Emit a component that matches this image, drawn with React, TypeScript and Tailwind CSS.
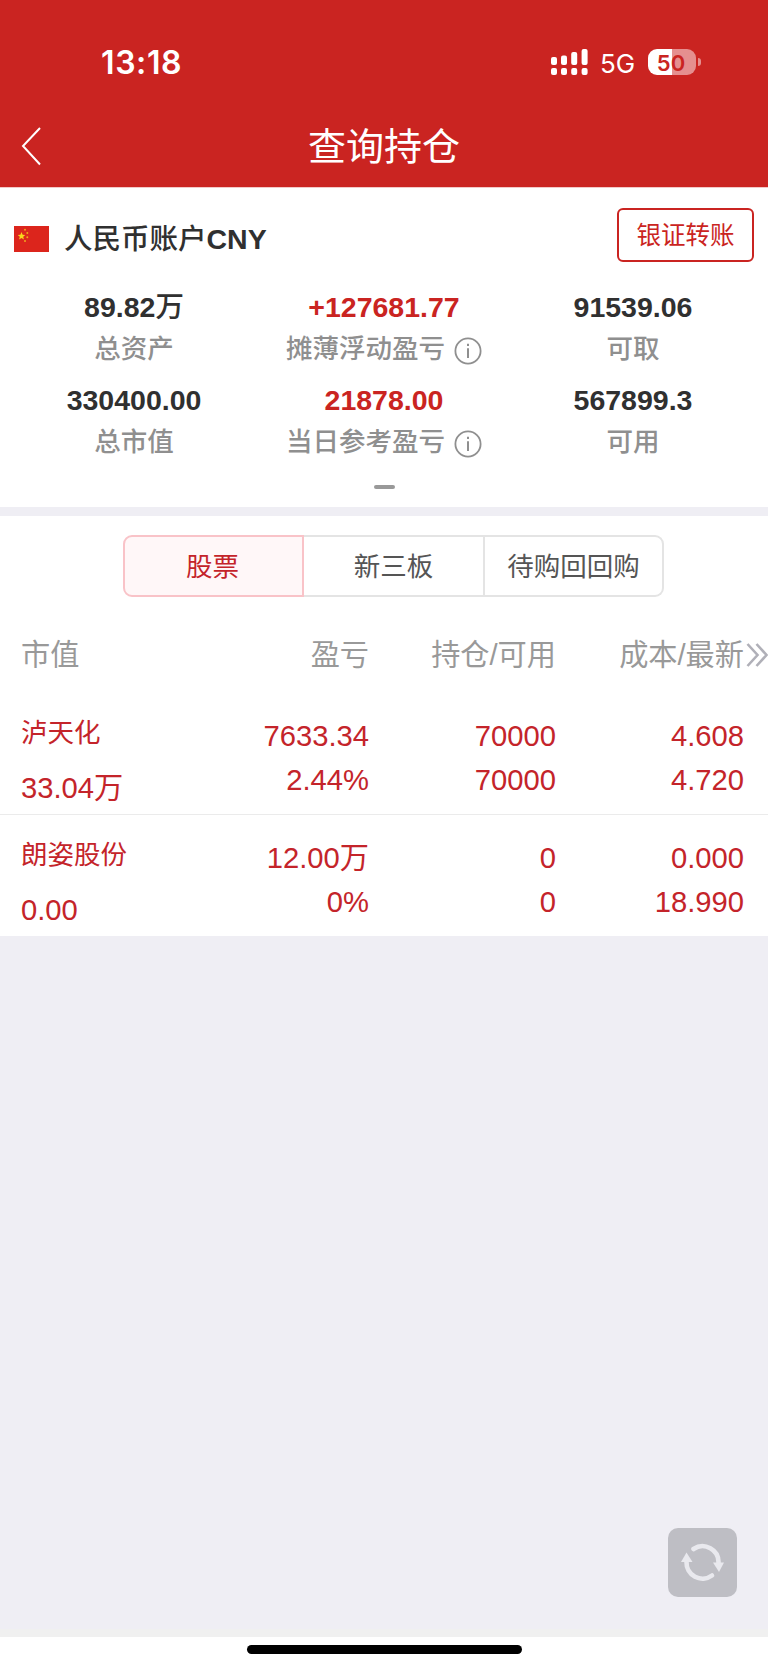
import React from 'react';

interface Stat {
  value: string;
  unit?: string;
  label: string;
  highlight?: boolean;
  info?: boolean;
}

interface Holding {
  name: string;
  marketValue: string;
  profit: string;
  profitRate: string;
  position: string;
  available: string;
  cost: string;
  latest: string;
}

const stats: Stat[] = [
  { value: '89.82', unit: '万', label: '总资产' },
  { value: '+127681.77', label: '摊薄浮动盈亏', highlight: true, info: true },
  { value: '91539.06', label: '可取' },
  { value: '330400.00', label: '总市值' },
  { value: '21878.00', label: '当日参考盈亏', highlight: true, info: true },
  { value: '567899.3', label: '可用' },
];

const holdings: Holding[] = [
  {
    name: '泸天化',
    marketValue: '33.04万',
    profit: '7633.34',
    profitRate: '2.44%',
    position: '70000',
    available: '70000',
    cost: '4.608',
    latest: '4.720',
  },
  {
    name: '朗姿股份',
    marketValue: '0.00',
    profit: '12.00万',
    profitRate: '0%',
    position: '0',
    available: '0',
    cost: '0.000',
    latest: '18.990',
  },
];

const StatusBar: React.FC = () => (
  <div className="flex h-[104px] items-start pt-[42px] pl-[101px] pr-[67px] font-['Inter',sans-serif] text-white">
    <span className="pt-[1px] text-[32px] leading-[40px] font-semibold tracking-[0.6px]">13:18</span>
    <div className="ml-auto flex h-[40px] items-center">
      <svg width="38" height="26" viewBox="0 0 38 26" fill="currentColor">
        <rect x="0" y="8" width="6" height="8" rx="2" />
        <rect x="10" y="6.5" width="6" height="9.5" rx="2" />
        <rect x="20.2" y="3" width="6" height="13" rx="2" />
        <rect x="30.6" y="0" width="6" height="16" rx="2" />
        <rect x="0" y="19" width="6" height="7" rx="2" />
        <rect x="10" y="19" width="6" height="7" rx="2" />
        <rect x="20.2" y="19" width="6" height="7" rx="2" />
        <rect x="30.6" y="19" width="6" height="7" rx="2" />
      </svg>
      <span className="ml-[11px] w-[36px] pt-[3px] text-[26px] leading-[32px]">5G</span>
      <div className="ml-[12px] flex h-[26px] w-[48px] items-center justify-center rounded-[9px] bg-linear-to-r from-white from-50% to-[#e58f8f] to-50% pt-px pr-[2px] text-[22px] leading-[26px] font-semibold text-[#ca2421]">
        50
      </div>
      <div className="ml-[2px] h-[8px] w-[3px] rounded-r-full bg-[#e58f8f]" />
    </div>
  </div>
);

const NavBar: React.FC = () => (
  <div className="grid h-[83px] grid-cols-3 items-center">
    <svg className="ml-[20px]" width="22" height="40" viewBox="0 0 22 40" fill="none" stroke="white" strokeWidth="2">
      <path d="M20 2 L3 20 L20 38.5" />
    </svg>
    <h1 className="pt-[3px] text-center text-[38px] leading-[44px] whitespace-nowrap text-white">查询持仓</h1>
  </div>
);

const ChinaFlag: React.FC = () => (
  <svg width="35" height="26" viewBox="0 0 35 26">
    <rect width="35" height="26" fill="#dc251c" />
    <path
      d="M7.5 6 L8.6 8.7 L11.3 8.9 L9.2 10.7 L9.9 13.4 L7.5 11.9 L5.1 13.4 L5.8 10.7 L3.7 8.9 L6.4 8.7 Z"
      fill="#f8d61c"
    />
    <circle cx="11" cy="3.8" r="1" fill="#f0a41c" />
    <circle cx="13.3" cy="7" r="1" fill="#f0a41c" />
    <circle cx="13.3" cy="11.2" r="1" fill="#f0a41c" />
    <circle cx="11" cy="15" r="1" fill="#f0a41c" />
  </svg>
);

const InfoIcon: React.FC = () => (
  <svg className="mt-[3px] ml-[9px]" width="28" height="28" viewBox="0 0 28 28" fill="none" stroke="#8f8f8f">
    <circle cx="14" cy="14" r="12.6" strokeWidth="1.8" />
    <path d="M14 11.3 V21" strokeWidth="2" />
    <path d="M14 6.8 V9" strokeWidth="2" />
  </svg>
);

const StatCell: React.FC<{ stat: Stat }> = ({ stat }) => (
  <div className="flex h-[93px] flex-col items-center">
    <div
      className={
        stat.highlight
          ? 'text-[28.5px] leading-[40px] font-bold text-[#ca2421]'
          : 'text-[28.5px] leading-[40px] font-bold text-[#303030]'
      }
    >
      {stat.value}
      {stat.unit && <span className="font-medium">{stat.unit}</span>}
    </div>
    <div className="mt-px flex h-[42px] items-center text-[26.5px] leading-[42px] font-medium whitespace-nowrap text-[#8f8f8f]">
      {stat.label}
      {stat.info && <InfoIcon />}
    </div>
  </div>
);

const AccountSummary: React.FC = () => (
  <section className="h-[319px] bg-white">
    <div className="flex h-[94px] items-start pt-[20px] pr-[14px] pl-[14px]">
      <div className="flex h-[62px] items-center">
        <ChinaFlag />
        <h2 className="ml-[15px] text-[28.5px] leading-[40px] font-medium text-[#303030]">
          人民币账户<span className="font-bold">CNY</span>
        </h2>
      </div>
      <button className="ml-auto h-[54px] w-[137px] rounded-[6px] border-2 border-[#ca2421] pt-[2px] text-[24.5px] leading-[48px] text-[#ca2421]">
        银证转账
      </button>
    </div>
    <div className="grid grid-cols-[268px_232px_266px] pt-[5px]">
      {stats.map((stat) => (
        <StatCell key={stat.label} stat={stat} />
      ))}
    </div>
    <div className="mx-auto mt-[12px] h-[4px] w-[21px] rounded-full bg-[#999999]" />
  </section>
);

const MarketTabs: React.FC = () => (
  <div className="ml-[123px] grid h-[61px] w-[541px] grid-cols-[181px_181px_179px] text-center text-[26.5px] leading-[56px] text-[#555555]">
    <button className="rounded-l-[9px] border-2 border-[#f9c3c8] bg-[#fff7f8] pt-[2px] pr-[2px] text-[#c4242a]">股票</button>
    <button className="border-y-2 border-r-2 border-[#e4e4e4] pt-[2px]">新三板</button>
    <button className="rounded-r-[9px] border-y-2 border-r-2 border-[#e4e4e4] pt-[2px]">待购回回购</button>
  </div>
);

const HoldingRow: React.FC<{ holding: Holding }> = ({ holding }) => (
  <div className="grid h-[122px] grid-cols-[178px_170px_187px_188px] pl-[21px] text-[29.2px] leading-[44px]">
    <div className="flex flex-col pt-[18px] whitespace-nowrap">
      <span className="text-[26.5px] leading-[44px]">{holding.name}</span>
      <span className="mt-[11px]">{holding.marketValue}</span>
    </div>
    <div className="flex flex-col pt-[21px] text-right">
      <span>{holding.profit}</span>
      <span>{holding.profitRate}</span>
    </div>
    <div className="flex flex-col pt-[21px] text-right">
      <span>{holding.position}</span>
      <span>{holding.available}</span>
    </div>
    <div className="flex flex-col pt-[21px] text-right">
      <span>{holding.cost}</span>
      <span>{holding.latest}</span>
    </div>
  </div>
);

const HoldingsPanel: React.FC = () => (
  <section className="h-[420px] bg-white pt-[19px]">
    <MarketTabs />
    <div className="mt-[37px] grid h-[44px] grid-cols-[178px_170px_187px_188px_24px] items-center pl-[21px] text-[29.2px] leading-[44px] whitespace-nowrap text-[#999999]">
      <span>市值</span>
      <span className="text-right">盈亏</span>
      <span className="text-right">持仓/可用</span>
      <span className="text-right">成本/最新</span>
      <svg className="ml-[2px]" width="22" height="26" viewBox="0 0 22 26" fill="none" stroke="#b0b0b8" strokeWidth="2.6">
        <path d="M1.5 2 L11.5 13 L1.5 24" />
        <path d="M10.5 2 L20.5 13 L10.5 24" />
      </svg>
    </div>
    <div className="mt-[16px] divide-y divide-[#ebebeb] text-[#c4242a]">
      {holdings.map((holding) => (
        <HoldingRow key={holding.name} holding={holding} />
      ))}
    </div>
  </section>
);

const RefreshButton: React.FC = () => (
  <button className="flex h-[69px] w-[69px] items-center justify-center rounded-[10px] bg-[#bebec4]">
    <svg width="43" height="43" viewBox="0 0 43 43" fill="none" stroke="#e9e9ee" strokeWidth="4.6" strokeLinecap="round">
      <path d="M12.5 8 A16 16 0 0 1 37.5 22" />
      <path d="M31 34.5 A16 16 0 0 1 5.5 21" />
      <path d="M32 21.5 L43 21.5 L38 31 Z" fill="#e9e9ee" stroke="none" />
      <path d="M0 21 L11.5 21 L5.5 11.5 Z" fill="#e9e9ee" stroke="none" />
    </svg>
  </button>
);

const App: React.FC = () => {
  return (
    <div className="flex h-[1670px] w-[768px] flex-col overflow-hidden bg-[#efeef4] font-['Liberation_Sans','Noto_Sans_CJK_SC',sans-serif]">
      <header className="h-[188px] border-b border-[#f3c9c8] bg-[#ca2421]">
        <StatusBar />
        <NavBar />
      </header>
      <AccountSummary />
      <div className="h-[9px] bg-[#efeef4]" />
      <HoldingsPanel />
      <div className="flex flex-1 items-end justify-end pr-[31px] pb-[32px]">
        <RefreshButton />
      </div>
      <div className="h-[8px] bg-[#f0f0f0]" />
      <footer className="h-[33px] bg-white pt-[8px]">
        <div className="mx-auto h-[9px] w-[275px] rounded-full bg-black" />
      </footer>
    </div>
  );
};

export default App;
